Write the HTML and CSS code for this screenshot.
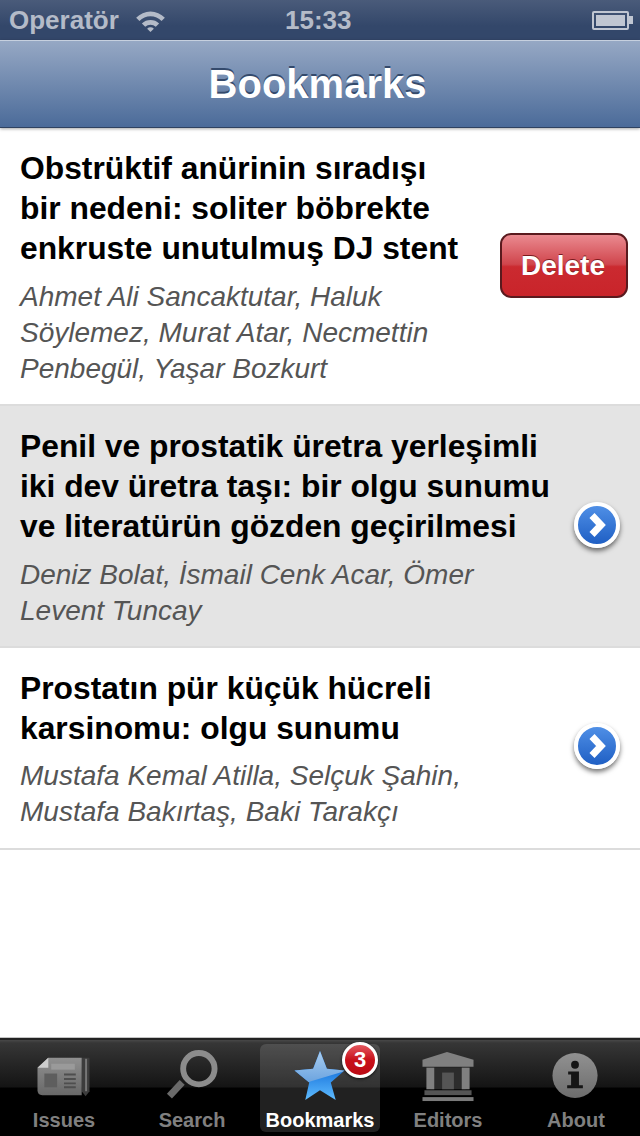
FILE: index.html
```html
<!DOCTYPE html>
<html lang="en">

<head>
    <meta charset="UTF-8" />
    <meta name="viewport" content="width=device-width, initial-scale=1.0" />
    <title>Bookmarks</title>
    <link rel="stylesheet" href="styles.css">
</head>

<body>
    <div class="app">
        <div class="statusBar">
            <div class="carrier">
                <span>Operatör</span>
                <svg class="wifi" width="31" height="23" viewBox="0 0 32 24">
                    <path d="M1 9 A21 21 0 0 1 31 9 L27.500 12.500 A16 16 0 0 0 4.500 12.500 Z" fill="#b4bbc8" />
                    <path d="M7 15 A13 13 0 0 1 25 15 L21.500 18.500 A8 8 0 0 0 10.500 18.500 Z" fill="#b4bbc8" />
                    <path d="M12.500 20.500 A5 5 0 0 1 19.500 20.500 L16 24 Z" fill="#b4bbc8" />
                </svg>
            </div>
            <div class="clock">15:33</div>
            <div class="battery">
                <div class="batteryBody"><div class="batteryFill"></div></div>
                <div class="batteryTip"></div>
            </div>
        </div>

        <div class="navBar">
            <h1>Bookmarks</h1>
        </div>

        <div class="list">
            <div class="row row1">
                <div class="rowText">
                    <h2>Obstrüktif anürinin sıradışı<br>bir nedeni: soliter böbrekte<br>enkruste unutulmuş DJ stent</h2>
                    <p>Ahmet Ali Sancaktutar, Haluk<br>Söylemez, Murat Atar, Necmettin<br>Penbegül, Yaşar Bozkurt</p>
                </div>
                <button class="deleteBtn" type="button">Delete</button>
            </div>

            <div class="row row2 selected">
                <div class="rowText">
                    <h2>Penil ve prostatik üretra yerleşimli<br>iki dev üretra taşı: bir olgu sunumu<br>ve literatürün gözden geçirilmesi</h2>
                    <p>Deniz Bolat, İsmail Cenk Acar, Ömer<br>Levent Tuncay</p>
                </div>
                <div class="disclosure">
                    <svg width="20" height="26" viewBox="0 0 20 26">
                        <path d="M5 3.500 L14 13 L5 22.500" fill="none" stroke="#fff" stroke-width="7" />
                    </svg>
                </div>
            </div>

            <div class="row row3">
                <div class="rowText">
                    <h2>Prostatın pür küçük hücreli<br>karsinomu: olgu sunumu</h2>
                    <p>Mustafa Kemal Atilla, Selçuk Şahin,<br>Mustafa Bakırtaş, Baki Tarakçı</p>
                </div>
                <div class="disclosure">
                    <svg width="20" height="26" viewBox="0 0 20 26">
                        <path d="M5 3.500 L14 13 L5 22.500" fill="none" stroke="#fff" stroke-width="7" />
                    </svg>
                </div>
            </div>
        </div>

        <div class="tabBar">
            <div class="tab">
                <svg width="60" height="54" viewBox="0 0 60 54">
                    <defs>
                        <linearGradient id="grayFill" x1="0" y1="0" x2="0" y2="1">
                            <stop offset="0" stop-color="#909090" />
                            <stop offset="1" stop-color="#686868" />
                        </linearGradient>
                    </defs>
                    <path d="M48 8 H56 V42 L52 47 L48 42 Z" fill="#3c3c3c" />
                    <path d="M52.500 9 V42" stroke="#777" stroke-width="2" />
                    <path d="M14 8 H48 V46 H8 Q3 46 3 41 V18 Z" fill="url(#grayFill)" />
                    <path d="M3 18 L14 8 V18 Z" fill="#cdcdcd" />
                    <rect x="17" y="14" width="24" height="6" fill="#9a9a9a" />
                    <rect x="10" y="24" width="13" height="14" fill="#5e5e5e" />
                    <path d="M30 25 H42 M30 29.500 H42 M30 34 H42 M30 38 H42" stroke="#4e4e4e" stroke-width="2" />
                </svg>
                <span>Issues</span>
            </div>
            <div class="tab">
                <svg width="60" height="54" viewBox="0 0 60 54">
                    <path d="M20 33 L7 47" stroke="#6a6a6a" stroke-width="7" />
                    <circle cx="37" cy="19" r="16" fill="none" stroke="#8c8c8c" stroke-width="6" />
                </svg>
                <span>Search</span>
            </div>
            <div class="tab tabActive">
                <svg width="60" height="54" viewBox="0 0 60 54">
                    <defs>
                        <linearGradient id="starLower" x1="0" y1="0" x2="0" y2="1">
                            <stop offset="0.4" stop-color="#1c78de" />
                            <stop offset="1" stop-color="#5fbcff" />
                        </linearGradient>
                        <linearGradient id="starUpper" x1="0" y1="0" x2="0" y2="1">
                            <stop offset="0" stop-color="#a9cdf0" />
                            <stop offset="0.6" stop-color="#6fa6e0" />
                        </linearGradient>
                        <clipPath id="starGloss">
                            <path d="M0 0 H60 V20 L20 32 L0 40 Z" />
                        </clipPath>
                    </defs>
                    <path d="M30 1 L37 19 L55 21 L41 33 L46 51 L30 41 L15 51 L19 33 L4 21 L23 19 Z" fill="url(#starLower)" />
                    <path d="M30 1 L37 19 L55 21 L41 33 L46 51 L30 41 L15 51 L19 33 L4 21 L23 19 Z" fill="url(#starUpper)" clip-path="url(#starGloss)" />
                </svg>
                <span>Bookmarks</span>
                <div class="badge">3</div>
            </div>
            <div class="tab">
                <svg width="60" height="54" viewBox="0 0 60 54">
                    <rect x="12" y="18" width="36" height="22" fill="#2c2c2c" />
                    <path d="M29 2 L56 10 V17 H4 V10 Z" fill="#808080" />
                    <rect x="8" y="18" width="8" height="22" fill="#808080" />
                    <rect x="44" y="18" width="8" height="22" fill="#808080" />
                    <rect x="24" y="23" width="12" height="17" fill="#555" />
                    <rect x="6" y="41" width="48" height="5" fill="#555" />
                    <rect x="4" y="48" width="52" height="4" fill="#7a7a7a" />
                </svg>
                <span>Editors</span>
            </div>
            <div class="tab">
                <svg width="60" height="54" viewBox="0 0 60 54">
                    <defs>
                        <linearGradient id="infoFill" x1="0" y1="0" x2="0" y2="1">
                            <stop offset="0" stop-color="#919191" />
                            <stop offset="1" stop-color="#6c6c6c" />
                        </linearGradient>
                    </defs>
                    <circle cx="29" cy="26" r="23" fill="url(#infoFill)" />
                    <circle cx="29" cy="15" r="4" fill="#151515" />
                    <path d="M22 22 H33 V36 H37 V39 H21 V36 H25 V25 H22 Z" fill="#151515" />
                </svg>
                <span>About</span>
            </div>
        </div>
    </div>
</body>

</html>
```

FILE: styles.css
```css
body {
    margin: 0;
    font-family: "Liberation Sans", Arial, sans-serif;
    background-color: white;
}

.app {
    display: flex;
    flex-direction: column;
    width: 640px;
    height: 1136px;
    overflow: hidden;
}

.statusBar {
    display: flex;
    align-items: center;
    justify-content: space-between;
    height: 40px;
    padding: 0 7px 0 9px;
    box-sizing: border-box;
    position: relative;
    background: linear-gradient(#4a5b7a, #33476a 65%);
    color: #b4bbc8;
    font-size: 26px;
    font-weight: bold;
}

.carrier {
    display: flex;
    align-items: center;
    gap: 16px;
}

.clock {
    position: absolute;
    left: 285px;
    top: 5px;
}

.battery {
    display: flex;
    align-items: center;
}

.batteryBody {
    width: 37px;
    height: 19px;
    padding: 2px;
    box-sizing: border-box;
    border: 2px solid #c0c6d2;
    border-radius: 2px;
}

.batteryFill {
    height: 100%;
    background-color: #c0c6d2;
}

.batteryTip {
    width: 4px;
    height: 8px;
    background-color: #c0c6d2;
}

.navBar {
    display: flex;
    align-items: center;
    justify-content: center;
    height: 88px;
    padding-right: 5px;
    box-sizing: border-box;
    border-top: 1px solid #c6d0df;
    border-bottom: 1px solid #2f4260;
    background: linear-gradient(#96a8c4, #4b6b99);
    box-shadow: 0 1px 3px rgba(0, 0, 0, 0.35);
    position: relative;
}

h1 {
    margin: 0;
    color: white;
    font-size: 40px;
    text-shadow: 0 -2px 0 #344a6c;
}

.list {
    flex: 1;
}

.row {
    display: flex;
    align-items: center;
    justify-content: space-between;
    box-sizing: border-box;
    padding: 0 20px;
    border-bottom: 2px solid #dcdcdc;
}

.row1 {
    height: 278px;
    padding-right: 12px;
}

.row2 {
    height: 242px;
}

.row3 {
    height: 202px;
}

.selected {
    background-color: #e4e4e4;
}

.rowText {
    align-self: flex-start;
    padding-top: 20px;
}

h2 {
    margin: 0 0 11px;
    color: black;
    font-size: 31.800px;
    line-height: 40px;
}

.rowText p {
    margin: 0;
    color: #555;
    font-size: 28px;
    font-style: italic;
    line-height: 36px;
}

.row3 h2 {
    margin-bottom: 10px;
}

.deleteBtn {
    width: 128px;
    height: 65px;
    margin-bottom: 2px;
    padding: 2px 8px 0 6px;
    border: 2px solid #5a1a1e;
    border-radius: 11px;
    background: linear-gradient(#ea8a90, #d0454c 48%, #cb2a30 52%, #c9242a);
    color: white;
    font-family: inherit;
    font-size: 28px;
    font-weight: bold;
    text-shadow: 0 -1px 0 #7a1a1e;
}

.disclosure {
    display: flex;
    align-items: center;
    justify-content: center;
    width: 38px;
    height: 38px;
    margin-bottom: 2px;
    border: 4px solid white;
    border-radius: 50%;
    background: linear-gradient(#4f8fe6, #1f5fc4);
    box-shadow: 0 3px 5px rgba(0, 0, 0, 0.55);
}

.row3 .disclosure {
    margin-bottom: 4px;
}

.tabBar {
    display: flex;
    gap: 8px;
    height: 98px;
    box-sizing: border-box;
    padding: 4px;
    border-top: 2px solid #222;
    background: linear-gradient(#484848, #363636 3px, #141414 49%, black 50%);
    box-shadow: 0 -1px 0 #c4c4c4;
    position: relative;
}

.tab {
    position: relative;
    flex: 1;
    display: flex;
    flex-direction: column;
    align-items: center;
    gap: 6px;
    padding-top: 6px;
    border-radius: 6px;
    color: #808080;
    font-size: 20px;
    font-weight: bold;
}

.tabActive {
    background-color: rgba(255, 255, 255, 0.13);
    color: white;
}

.badge {
    position: absolute;
    top: -2px;
    right: 2px;
    width: 30px;
    height: 30px;
    border: 3px solid white;
    border-radius: 50%;
    background: linear-gradient(#e4585f, #c8101a 50%, #bb0a14);
    color: white;
    font-size: 22px;
    line-height: 30px;
    text-align: center;
    box-shadow: 0 1px 3px rgba(0, 0, 0, 0.7);
}
```
